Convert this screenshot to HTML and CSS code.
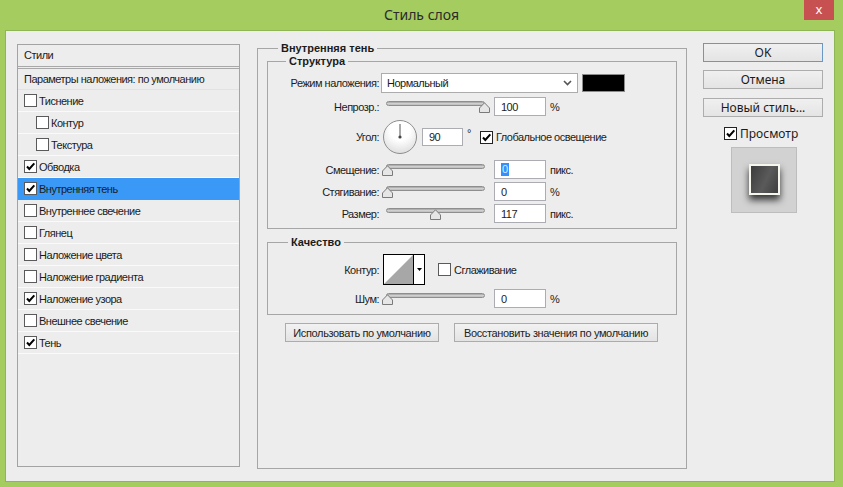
FILE: index.html
```html
<!DOCTYPE html>
<html lang="ru">
<head>
<meta charset="utf-8">
<title>Стиль слоя</title>
<link rel="stylesheet" href="styles.css">
</head>
<body>
<div class="window">
  <div class="titlebar">
    <span></span>
    <span class="title">Стиль слоя</span>
    <span class="close">x</span>
  </div>
  <div class="client">
    <div class="styles">
      <div class="hdr">Стили</div>
      <div class="item params">Параметры наложения: по умолчанию</div>
      <div class="item"><span class="cb"></span><span class="txt">Тиснение</span></div>
      <div class="item sub"><span class="cb"></span><span class="txt">Контур</span></div>
      <div class="item sub"><span class="cb"></span><span class="txt">Текстура</span></div>
      <div class="item"><span class="cb"><svg viewBox="0 0 11 11"><path d="M2 5.5 L4.3 8 L9.3 2.3"/></svg></span><span class="txt">Обводка</span></div>
      <div class="item active"><span class="cb"><svg viewBox="0 0 11 11"><path d="M2 5.5 L4.3 8 L9.3 2.3"/></svg></span><span class="txt">Внутренняя тень</span></div>
      <div class="item"><span class="cb"></span><span class="txt">Внутреннее свечение</span></div>
      <div class="item"><span class="cb"></span><span class="txt">Глянец</span></div>
      <div class="item"><span class="cb"></span><span class="txt">Наложение цвета</span></div>
      <div class="item"><span class="cb"></span><span class="txt">Наложение градиента</span></div>
      <div class="item"><span class="cb"><svg viewBox="0 0 11 11"><path d="M2 5.5 L4.3 8 L9.3 2.3"/></svg></span><span class="txt">Наложение узора</span></div>
      <div class="item"><span class="cb"></span><span class="txt">Внешнее свечение</span></div>
      <div class="item"><span class="cb"><svg viewBox="0 0 11 11"><path d="M2 5.5 L4.3 8 L9.3 2.3"/></svg></span><span class="txt">Тень</span></div>
    </div>

    <fieldset class="main">
      <legend>Внутренняя тень</legend>
      <fieldset class="grp struct">
        <legend>Структура</legend>
        <div class="row r-mode">
          <span class="lbl">Режим наложения:</span>
          <div class="select"><span>Нормальный</span><svg class="chev" viewBox="0 0 9 6"><path d="M1 1 L4.5 4.5 L8 1"/></svg></div>
          <span class="swatch"></span>
        </div>
        <div class="row srow r-op">
          <span class="lbl">Непрозр.:</span>
          <div class="slider"><div class="track"></div><svg class="thumb" style="left:97px" viewBox="0 0 11 11"><path d="M0.5 10.5 L0.5 6 L5.5 0.8 L10.5 6 L10.5 10.5 Z"/></svg></div>
          <span class="num">100</span>
          <span class="unit">%</span>
        </div>
        <div class="row drow">
          <span class="lbl">Угол:</span>
          <div class="dial"><svg viewBox="0 0 32 32"><line x1="16" y1="16" x2="16" y2="3"/><circle cx="16" cy="16" r="1.6"/></svg></div>
          <span class="num angle">90</span>
          <span class="deg">°</span>
          <span class="cb gcb"><svg viewBox="0 0 11 11"><path d="M2 5.5 L4.3 8 L9.3 2.3"/></svg></span>
          <span class="ctxt">Глобальное освещение</span>
        </div>
        <div class="row srow r-off">
          <span class="lbl">Смещение:</span>
          <div class="slider"><div class="track"></div><svg class="thumb" style="left:0px" viewBox="0 0 11 11"><path d="M0.5 10.5 L0.5 6 L5.5 0.8 L10.5 6 L10.5 10.5 Z"/></svg></div>
          <span class="num"><span class="sel">0</span></span>
          <span class="unit">пикс.</span>
        </div>
        <div class="row srow r-chk">
          <span class="lbl">Стягивание:</span>
          <div class="slider"><div class="track"></div><svg class="thumb" style="left:0px" viewBox="0 0 11 11"><path d="M0.5 10.5 L0.5 6 L5.5 0.8 L10.5 6 L10.5 10.5 Z"/></svg></div>
          <span class="num">0</span>
          <span class="unit">%</span>
        </div>
        <div class="row srow r-size">
          <span class="lbl">Размер:</span>
          <div class="slider"><div class="track"></div><svg class="thumb" style="left:48px" viewBox="0 0 11 11"><path d="M0.5 10.5 L0.5 6 L5.5 0.8 L10.5 6 L10.5 10.5 Z"/></svg></div>
          <span class="num">117</span>
          <span class="unit">пикс.</span>
        </div>
      </fieldset>

      <fieldset class="grp quality">
        <legend>Качество</legend>
        <div class="row crow">
          <span class="lbl">Контур:</span>
          <div class="picker">
            <svg class="curve" viewBox="0 0 29 29" preserveAspectRatio="none"><polygon points="0,29 29,0 29,29"/></svg>
            <span class="parrow"><svg viewBox="0 0 5 3"><polygon points="0,0 5,0 2.5,3"/></svg></span>
          </div>
          <span class="cb scb"></span>
          <span class="ctxt">Сглаживание</span>
        </div>
        <div class="row srow r-noise">
          <span class="lbl">Шум:</span>
          <div class="slider"><div class="track"></div><svg class="thumb" style="left:0px" viewBox="0 0 11 11"><path d="M0.5 10.5 L0.5 6 L5.5 0.8 L10.5 6 L10.5 10.5 Z"/></svg></div>
          <span class="num">0</span>
          <span class="unit">%</span>
        </div>
      </fieldset>

      <div class="btns">
        <button class="btn b1">Использовать по умолчанию</button>
        <button class="btn b2">Восстановить значения по умолчанию</button>
      </div>
    </fieldset>

    <div class="side">
      <button class="pbtn ok">OK</button>
      <button class="pbtn cancel">Отмена</button>
      <button class="pbtn newstyle">Новый стиль...</button>
      <div class="pcheck"><span class="cb pcb"><svg viewBox="0 0 11 11"><path d="M2 5.5 L4.3 8 L9.3 2.3"/></svg></span><span>Просмотр</span></div>
      <div class="preview"><div class="sq"></div></div>
    </div>
  </div>
</div>
</body>
</html>
```

FILE: styles.css
```css
* { box-sizing: border-box; }

body {
  margin: 0;
  width: 843px;
  height: 487px;
  overflow: hidden;
  background: #a4cc5f;
  font-family: "Liberation Sans", Arial, sans-serif;
  font-size: 11px;
  letter-spacing: -0.5px;
  color: #1b1b1b;
}

.window {
  display: flex;
  flex-direction: column;
  height: 487px;
}

.titlebar {
  height: 30px;
  flex: none;
  display: grid;
  grid-template-columns: 1fr auto 1fr;
  align-items: start;
  letter-spacing: 0;
}

.title {
  font-family: "Noto Sans", sans-serif;
  font-size: 14px;
  line-height: 30px;
  color: #2b2b2b;
}

.close {
  justify-self: end;
  margin-right: 9px;
  width: 30px;
  height: 20px;
  background: #c75050;
  color: #fff;
  font-family: "Noto Sans", sans-serif;
  font-size: 13px;
  line-height: 18px;
  text-align: center;
}

.client {
  flex: 1;
  margin: 0 8px 5px 5px;
  background: #ededed;
  border: 1px solid #8fb655;
  display: flex;
  align-items: flex-start;
  padding: 13px 0 0 11px;
}

/* left styles list */
.styles {
  width: 223px;
  height: 423px;
  flex: none;
  border: 1px solid #a3a3a3;
  background: #ededed;
}

.hdr {
  height: 22px;
  line-height: 21px;
  padding-left: 6px;
  border-bottom: 1px solid #a8a8a8;
}

.item {
  height: 22px;
  display: flex;
  align-items: center;
  padding-left: 6px;
  border-bottom: 1px solid #fafafa;
}

.item.params {
  margin-top: 1px;
  border-top: 1px solid #a8a8a8;
  height: 22px;
  border-bottom-color: #e2e2e2;
}

.item.sub { padding-left: 18px; }

.item.active { background: #3a99f6; border-bottom-color: #3a99f6; }

.txt { margin-left: 2px; }

.cb {
  width: 13px;
  height: 13px;
  flex: none;
  background: #fff;
  border: 1px solid #5a5a5a;
  display: flex;
  align-items: center;
  justify-content: center;
}

.cb svg { width: 11px; height: 11px; }
.cb svg path { fill: none; stroke: #000; stroke-width: 2; }

/* middle panel */
fieldset {
  margin: 0;
  min-width: 0;
}

legend {
  padding: 0 3px;
  font-weight: bold;
  font-size: 11px;
  letter-spacing: 0;
  line-height: 13px;
}

.main {
  width: 430px;
  height: 427px;
  flex: none;
  margin: -2px 0 0 17px;
  border: 1px solid #a6a6a6;
  padding: 0 9px;
}

.main > legend { margin-left: 11px; }

.grp {
  border: 1px solid #a6a6a6;
  padding: 0 0 5px 0;
}

.struct > legend { margin-left: 18px; }

.quality { margin-top: 7px; padding-bottom: 6px; }
.quality > legend { margin-left: 20px; }

.row {
  display: flex;
  align-items: center;
}

.lbl {
  width: 111px;
  flex: none;
  text-align: right;
}

.r-mode { height: 20px; margin-top: 5px; }

.select {
  margin-left: 2px;
  width: 197px;
  height: 20px;
  border: 1px solid #acacac;
  background: #fff;
  display: flex;
  align-items: center;
  justify-content: space-between;
  padding: 0 5px 0 5px;
}

.chev { width: 9px; height: 6px; }
.chev path { fill: none; stroke: #555; stroke-width: 1.6; }

.swatch {
  margin-left: 4px;
  width: 43px;
  height: 18px;
  background: #000;
  border: 1px solid #8c8c8c;
}

.srow { height: 19px; }
.r-op { margin-top: 4px; }
.r-off { margin-top: 6px; }
.r-chk { margin-top: 3px; }
.r-size { margin-top: 3px; }

.slider {
  position: relative;
  width: 108px;
  height: 19px;
  margin-left: 3px;
  padding: 4px 5px 0 4px;
}

.track {
  height: 5px;
  border-radius: 3px;
  border: 1px solid #8e8e8e;
  background: linear-gradient(#a0a0a0, #d9d9d9 60%, #b3b3b3);
}

.thumb {
  position: absolute;
  top: 5px;
  width: 11px;
  height: 11px;
}

.thumb path {
  fill: #e6e6e6;
  stroke: #7a7a7a;
  stroke-width: 1;
  stroke-linejoin: round;
}

.num {
  margin-left: 4px;
  width: 52px;
  height: 19px;
  border: 1px solid #abadb3;
  background: #fff;
  padding-left: 6px;
  display: flex;
  align-items: center;
}

.sel {
  background: #3390ff;
  color: #dde9ff;
  padding: 0 1px;
  line-height: 13px;
}

.unit { margin-left: 4px; }

.drow { height: 34px; margin-top: 4px; }

.dial {
  margin-left: 4px;
  width: 34px;
  height: 34px;
  flex: none;
  border-radius: 50%;
  border: 1px solid #8e8e8e;
  background: radial-gradient(circle at 50% 30%, #ffffff 35%, #e4e4e4 75%, #cfcfcf 100%);
}

.dial svg { width: 32px; height: 32px; display: block; }
.dial line { stroke: #555; stroke-width: 1; }
.dial circle { fill: #444; }

.num.angle {
  margin-left: 5px;
  width: 41px;
  height: 18px;
}

.deg {
  margin-left: 4px;
  align-self: flex-start;
  margin-top: 7px;
}

.gcb { margin-left: 9px; border-color: #222; }

.ctxt { margin-left: 3px; }

.crow { height: 31px; margin-top: 5px; }

.picker {
  margin-left: 4px;
  width: 42px;
  height: 31px;
  flex: none;
  border: 1px solid #000;
  background: #fff;
  display: flex;
}

.curve { width: 29px; height: 29px; display: block; }
.curve polygon { fill: #a7a7a7; }

.parrow {
  flex: 1;
  border-left: 1px solid #000;
  display: flex;
  align-items: center;
  justify-content: center;
}

.parrow svg { width: 5px; height: 3px; }
.parrow polygon { fill: #000; }

.scb { margin-left: 13px; }

.r-noise { margin-top: 4px; }

.btns {
  display: flex;
  gap: 15px;
  margin-top: 8px;
  padding-left: 18px;
}

.btn {
  height: 19px;
  padding: 0;
  border: 1px solid #acacac;
  border-radius: 0;
  background: linear-gradient(#f2f2f2, #e3e3e3);
  font-family: "Liberation Sans", Arial, sans-serif;
  font-size: 11px;
  letter-spacing: -0.35px;
  color: #222;
}

.b1 { width: 154px; }
.b2 { width: 204px; }

/* right column */
.side {
  width: 120px;
  flex: none;
  margin: -1px 0 0 16px;
  display: flex;
  flex-direction: column;
  align-items: flex-start;
  letter-spacing: 0;
}

.pbtn {
  width: 120px;
  height: 19px;
  padding: 0;
  border: 1px solid #adadad;
  border-radius: 0;
  background: linear-gradient(#f0f0f0, #e4e4e4);
  font-family: "Noto Sans", sans-serif;
  font-size: 12px;
  line-height: 17px;
  color: #1b1b1b;
}

.ok { border-color: #6b97c4; }
.cancel { margin-top: 8px; }
.newstyle { margin-top: 9px; }

.pcheck {
  margin: 10px 0 0 21px;
  height: 13px;
  display: flex;
  align-items: center;
  gap: 3px;
  font-family: "Noto Sans", sans-serif;
  font-size: 12px;
  line-height: 13px;
}

.pcb { border-color: #222; }

.preview {
  margin: 7px 0 0 28px;
  width: 66px;
  height: 66px;
  background: #d2d2d2;
  border: 1px solid #bdbdbd;
  display: flex;
  align-items: center;
  justify-content: center;
}

.sq {
  width: 31px;
  height: 31px;
  margin-top: -2px;
  border: 2px solid #f6f6ee;
  background: linear-gradient(115deg, #3c3c3c, #5a5a5a 55%, #3e3e3e);
  box-shadow: 0 5px 7px rgba(0, 0, 0, 0.75);
}
```
